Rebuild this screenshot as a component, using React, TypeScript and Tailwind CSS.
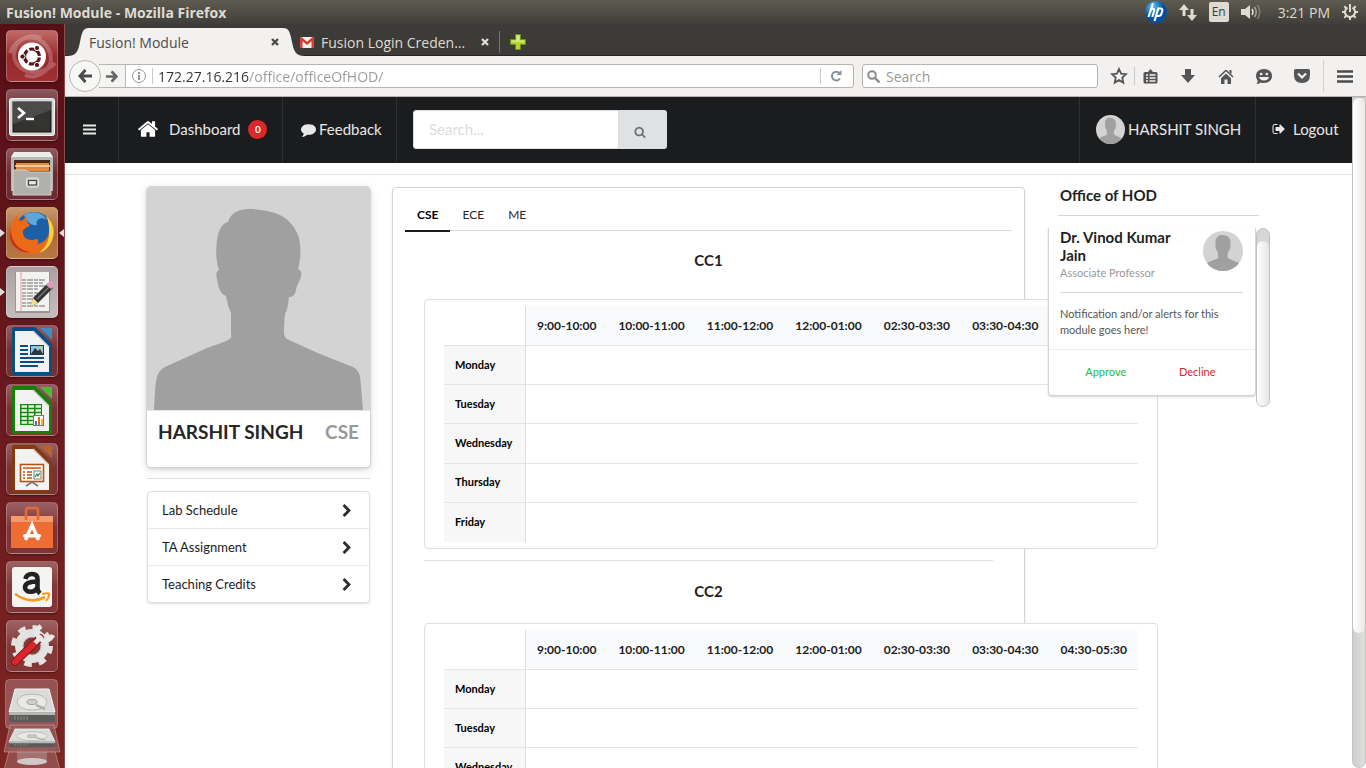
import React, { useState } from "react";
import type { ReactNode } from "react";

const SLOTS = ["9:00-10:00", "10:00-11:00", "11:00-12:00", "12:00-01:00", "02:30-03:30", "03:30-04:30", "04:30-05:30"];
const DAYS = ["Monday", "Tuesday", "Wednesday", "Thursday", "Friday"];
const BRANCHES = ["CSE", "ECE", "ME"];
const LINKS = ["Lab Schedule", "TA Assignment", "Teaching Credits"];

const PATHS = {
  home: "M1472 992v480q0 26-19 45t-45 19h-384v-384h-256v384h-384q-26 0-45-19t-19-45v-480q0-1 .5-3t.5-3l575-474 575 474q1 2 1 6zm223-69l-62 74q-8 9-21 11h-3q-13 0-21-7l-692-577-692 577q-12 8-24 7-13-2-21-11l-62-74q-8-10-7-23.5t11-21.5l719-599q32-26 76-26t76 26l244 204v-195q0-14 9-23t23-9h192q14 0 23 9t9 23v408l219 182q10 8 11 21.5t-7 23.5z",
  comment:
    "M1792 896q0 174-120 321.5t-326 233-450 85.5q-70 0-145-8-198 175-460 242-49 14-114 22-17 2-30.5-9t-17.5-29v-1q-3-4-.5-12t2-10 4.5-9.5l6-9 7-8.5 8-9q7-8 31-34.5t34.5-38 31-39.5 32.5-51 27-59 26-76q-157-89-247.5-220t-90.5-281q0-130 71-248.5t191-204.5 286-136.5 348-50.5q244 0 450 85.5t326 233 120 321.5z",
  search:
    "M1216 832q0-185-131.5-316.5t-316.5-131.5-316.5 131.5-131.5 316.5 131.5 316.5 316.5 131.5 316.5-131.5 131.5-316.5zm512 832q0 52-38 90t-90 38q-54 0-90-38l-343-342q-179 124-399 124-143 0-273.5-55.5t-225-150-150-225-55.5-273.5 55.5-273.5 150-225 225-150 273.5-55.5 273.5 55.5 225 150 150 225 55.5 273.5q0 220-124 399l343 343q37 37 37 90z",
  signOut:
    "M704 1440q0 4 1 20t.5 26.5-3 23.5-10 19.5-20.5 6.5h-320q-119 0-203.5-84.5t-84.5-203.5v-704q0-119 84.5-203.5t203.5-84.5h320q13 0 22.5 9.5t9.5 22.5q0 4 1 20t.5 26.5-3 23.5-10 19.5-20.5 6.5h-320q-66 0-113 47t-47 113v704q0 66 47 113t113 47h312l11.5 1 11.5 3 8 5.5 7 9 2 13.5zm928-544q0 26-19 45l-544 544q-19 19-45 19t-45-19-19-45v-288h-448q-26 0-45-19t-19-45v-384q0-26 19-45t45-19h448v-288q0-26 19-45t45-19 45 19l544 544q19 19 19 45z",
  chevron:
    "M1363 877l-742 742q-19 19-45 19t-45-19l-166-166q-19-19-19-45t19-45l531-531-531-531q-19-19-19-45t19-45l166-166q19-19 45-19t45 19l742 742q19 19 19 45t-19 45z",
};

function Glyph({ name, className }: { name: keyof typeof PATHS; className: string }) {
  return (
    <svg viewBox="0 0 1792 1792" fill="currentColor" className={className} aria-hidden="true">
      <path d={PATHS[name]} />
    </svg>
  );
}

function Avatar({ className }: { className: string }) {
  return (
    <svg viewBox="0 0 223 223" className={className} role="img" aria-label="Profile photo">
      <rect width="223" height="223" fill="#d3d3d3" />
      <path
        fill="#a0a0a0"
        d="M7 223C8 206 8 198 10 190C12 184 14 182 20 179L60 161C68 158 78 155 81 153C84 151 85 150 84 147V126C81 120 80 114 79 109C72 106 71 98 70 92C69 88 69 84 72 83C69 74 69 66 69.500 60C70 50 72 37 81 35C84 25 93 22 102 22C113 22 124 24 133 28C144 33 150 44 152 51C154 61 154 72 151 82C156 84 154 90 153 93C151 97 150 98 149 103C148 109 145 110 142 110C141 116 141 122 138 127C137 135 137 141 137 147C138 151 140 152 142 153L173 167L206 180C211 183 212 186 213 189C214 199 215 211 216 223Z"
      />
    </svg>
  );
}

/* ---------- desktop panel ---------- */

function TopPanel() {
  return (
    <header className="flex h-6 shrink-0 items-center justify-between bg-linear-to-b from-[#5e5b50] to-[#3f3e3a] pr-2 pl-[6px] font-['Open_Sans','Noto_Sans',sans-serif] text-[#dfdbd2]">
      <h1 className="text-[14px] font-bold">Fusion! Module - Mozilla Firefox</h1>
      <div className="flex items-center">
        <svg width="22" height="22" viewBox="0 0 22 22" className="mr-3">
          <defs>
            <radialGradient id="hpg" cx="35%" cy="25%">
              <stop offset="0" stopColor="#5cc0ee" />
              <stop offset="1" stopColor="#064f9e" />
            </radialGradient>
          </defs>
          <circle cx="11" cy="11" r="11" fill="url(#hpg)" />
          <path d="M8 2L3.500 16M5.500 9.500C7 7 9.800 7 9.200 10L7.300 16M13.600 6.500L9.500 20M12.800 7.500H15.500C18 7.500 17.500 9.500 17 11L16.500 12.500C16 14.500 15 15 13.500 15H11" fill="none" stroke="#fff" strokeWidth="2.100" />
        </svg>
        <svg width="18" height="17" viewBox="0 0 18 17" fill="currentColor" className="mr-3">
          <path d="M5 0L10 6H6.500V12H3.500V6H0ZM13 17L8 11H11.500V5H14.500V11H18Z" />
        </svg>
        <span className="mr-3 flex h-5 w-5 items-center justify-center rounded-xs bg-[#dfdbd2] text-[12px] text-[#3c3b37]">En</span>
        <svg width="21" height="18" viewBox="0 0 21 18" className="mr-4">
          <path d="M0 6H4L9 2V16L4 12H0Z" fill="currentColor" />
          <g fill="none" stroke="currentColor" strokeWidth="1.600">
            <path d="M11 6Q13 9 11 12" />
            <path d="M13.500 4Q17 9 13.500 14" opacity=".6" />
            <path d="M16.500 2Q21 9 16.500 16" opacity=".35" />
          </g>
        </svg>
        <time className="mr-3 text-[14px]">3:21 PM</time>
        <svg width="16" height="16" viewBox="0 0 16 16" fill="none" stroke="currentColor" strokeWidth="2">
          <path d="M5.500 3.700A5 5 0 1 0 10.500 3.700" />
          <path d="M8 0V8" />
          <path d="M0 8H3M13 8H16M8 13V16M2.300 2.300L4.300 4.300M13.700 2.300L11.700 4.300M2.300 13.700L4.400 11.600M13.700 13.700L11.600 11.600" />
        </svg>
      </div>
    </header>
  );
}

/* ---------- launcher ---------- */

function Tile({ label, tint, open, focused, children }: { label: string; tint?: string; open?: boolean; focused?: boolean; children: ReactNode }) {
  return (
    <div className="flex w-full shrink-0 items-center">
      <svg width="6" height="10" viewBox="0 0 6 10">{open && <path d="M0 1L5 5L0 9Z" fill="#e0dcd8" />}</svg>
      <button
        aria-label={label}
        className={`h-[52px] w-[52px] rounded-[5px] border border-white/25 shadow-[0_1px_2px_rgba(0,0,0,0.4)] ${tint ?? "bg-linear-to-b from-white/30 via-white/10 to-white/10"}`}
      >
        <svg width="50" height="50" viewBox="0 0 50 50">
          {children}
        </svg>
      </button>
      <svg width="6" height="10" viewBox="0 0 6 10">{focused && <path d="M6 1L1 5L6 9Z" fill="#e0dcd8" />}</svg>
    </div>
  );
}

function OfficeDoc({ color, light, children }: { color: string; light: string; children: ReactNode }) {
  return (
    <g>
      <path d="M7 1H28L45 18V46Q45 49 42 49H8Q5 49 5 46V4Q5 1 7 1Z" fill={color} />
      <path d="M8 5H26L42 21V46H8Z" fill="#f2f2f2" />
      <path d="M33 2H45V14Z" fill={light} />
      <path d="M26 5L42 21" stroke="#cfcfcf" strokeWidth="1.500" />
      {children}
    </g>
  );
}

function Drive({ y, flatten }: { y: number; flatten: number }) {
  return (
    <g transform={`translate(9 ${y}) scale(1 ${flatten})`}>
      <path d="M6 0H40L46 23H0Z" fill="#dadad8" stroke="#f2f2f2" strokeWidth="1" />
      <path d="M0 23H46V31Q46 33 44 33H2Q0 33 0 31Z" fill="#5a5a58" />
      <path d="M0 23H46V26H0Z" fill="#b5b5b2" />
      <ellipse cx="23" cy="13" rx="15" ry="8" fill="#e8e8e6" stroke="#b8b8b6" />
      <ellipse cx="23" cy="13" rx="5" ry="2.500" fill="#d0d0ce" stroke="#a0a09e" />
      <path d="M36 20L27 16" stroke="#aaa" strokeWidth="2" />
      <path d="M6 27V31M9 27V31M12 27V31M15 27V31M18 27V31" stroke="#8a8a88" />
    </g>
  );
}

function Launcher() {
  return (
    <nav aria-label="Launcher" className="flex w-[65px] shrink-0 flex-col gap-[7px] overflow-hidden border-r border-[#8f4a4c] bg-linear-to-b from-[#560f15] via-[#6a191e] to-[#7c2522] pt-[6px]">
      <Tile label="Search your computer" tint="bg-linear-to-b from-[#c06a6a] via-[#97282b] to-[#a03033]">
        <path d="M3 22C10 2 36 1 43 22C48 36 32 50 18 44M48 32C36 46 8 44 7 24C7 8 22 2 34 7" fill="none" stroke="#fff" strokeOpacity=".22" strokeWidth="4" />
        <circle cx="25" cy="25.500" r="14" fill="#fff" />
        <circle cx="25" cy="25.500" r="7.500" fill="none" stroke="#5e1216" strokeWidth="3.200" strokeDasharray="13.700 2" strokeDashoffset="-1" />
        <circle cx="15.500" cy="25.500" r="2.600" fill="#5e1216" stroke="#fff" />
        <circle cx="30" cy="17" r="2.600" fill="#5e1216" stroke="#fff" />
        <circle cx="30" cy="34" r="2.600" fill="#5e1216" stroke="#fff" />
      </Tile>
      <Tile label="Terminal">
        <rect x="2.500" y="8.500" width="45" height="37" rx="2" fill="#d8d8d6" stroke="#f4f4f4" />
        <rect x="6" y="12" width="38" height="30" fill="#333431" stroke="#111" />
        <path d="M6 12H44V20L6 34Z" fill="#4b4c49" />
        <path d="M11 18L17 23L11 28" fill="none" stroke="#fff" strokeWidth="2.600" />
        <path d="M19 29H27" stroke="#fff" strokeWidth="2.400" />
      </Tile>
      <Tile label="Files">
        <path d="M7 4H43L46 8V42H4V8Z" fill="#b9b9b6" />
        <path d="M7 3H43L46 8H4Z" fill="#ececea" />
        <rect x="7" y="11" width="36" height="12" fill="#4a2a1c" />
        <path d="M9 14H42V22H9Z" fill="#e58a3c" />
        <path d="M8 17H43" stroke="#f7e2c0" strokeWidth="1.500" />
        <path d="M6 21H19L22 23H44V46H6Z" fill="#b0b0ad" stroke="#cfcfcc" />
        <rect x="19.500" y="29" width="12" height="9" rx="2" fill="#c9c9c6" stroke="#e8e8e6" />
        <rect x="21.500" y="31.500" width="8" height="4.500" fill="#e9e9e7" stroke="#444" strokeWidth="1.200" />
      </Tile>
      <Tile label="Firefox" open focused tint="bg-linear-to-b from-[#c79a6c] via-[#a9683a] to-[#b97842]">
        <circle cx="27" cy="23" r="19" fill="#1c5fa5" />
        <path d="M17 7C24 2 36 4 40 12C34 8 28 12 30 17C24 18 20 14 17 7Z" fill="#5aa7dc" />
        <path d="M39 8C46 14 48 22 46 29C44 40 34 46 25 46C12 46 3 37 3 26C3 17 7 10 10 7C10 10 12 12 14 13C17 11 18 10 20 8C19 13 20 15 23 17C20 21 15 19 16 26C18 32 24 33 29 31C32 31 32 34 30 36C39 35 43 27 42 20C42 15 41 11 39 8Z" fill="#ea6a17" />
        <path d="M39 8C46 14 48 22 46 29C44 38 38 43 32 45C40 38 43 31 42 20C42 15 41 11 39 8Z" fill="#fbd23c" />
        <path d="M4 20C3 33 12 43 24 44C14 46 2 38 3 26Z" fill="#c3321c" />
      </Tile>
      <Tile label="Text Editor" open tint="bg-linear-to-b from-[#a9a09f] via-[#b8b0b0] to-[#c5bdbd]">
        <rect x="8" y="5" width="35" height="41" fill="#9b9695" />
        <path d="M9 5H42V44H9Z" fill="#f2f2f0" />
        <path d="M14 5V44" stroke="#e88" strokeWidth=".8" />
        <path d="M15 13H38M15 16H36M15 19H38M15 22H32M15 26H36M15 29H30M15 32H28M15 36H26M15 39H38" stroke="#9a9a9a" strokeWidth="1.300" strokeDasharray="4 1 6 1" />
        <path d="M23 40L26 31L41 16L46 21L31 36Z" fill="#333" />
        <path d="M39 18L43 14Q47 14 47 19L44 22Z" fill="#e79ab8" />
        <path d="M23 40L26 31L31 36Z" fill="#efe08c" />
        <path d="M30 32L42 20" stroke="#777" strokeWidth="1.500" />
      </Tile>
      <Tile label="Writer">
        <OfficeDoc color="#0a4f83" light="#3d8cc2">
          <path d="M13 20H21M13 24H21M13 28H21M13 32H37M13 36H37M13 40H31" stroke="#0b4d80" strokeWidth="2" />
          <rect x="23.500" y="19.500" width="13" height="9" fill="#8fc6ea" stroke="#0b3d60" />
          <path d="M24 28L28 22L31 25L33 23L36 28Z" fill="#333" />
          <circle cx="34" cy="21.500" r="1.200" fill="#f5c518" />
        </OfficeDoc>
      </Tile>
      <Tile label="Calc">
        <OfficeDoc color="#148008" light="#4fb83a">
          <rect x="13" y="19" width="22" height="21" fill="#148a12" />
          <path d="M14.500 21.500H20M21.500 21.500H27M28.500 21.500H34M14.500 25.500H20M21.500 25.500H27M28.500 25.500H34M14.500 29.500H20M21.500 29.500H27M28.500 29.500H34M14.500 33.500H20M21.500 33.500H27M14.500 37.500H20M21.500 37.500H27" stroke="#e6f8de" strokeWidth="2.600" />
          <rect x="26.500" y="30.500" width="10" height="10" fill="#fff" stroke="#777" />
          <path d="M29 40V36" stroke="#2a7fc0" strokeWidth="2" />
          <path d="M32 40V32" stroke="#e8641b" strokeWidth="2" />
          <path d="M35 40V34" stroke="#f2b632" strokeWidth="2" />
        </OfficeDoc>
      </Tile>
      <Tile label="Impress">
        <OfficeDoc color="#833a10" light="#b5652c">
          <rect x="13.500" y="20.500" width="23" height="17" fill="#fff" stroke="#b4501a" strokeWidth="1.600" />
          <path d="M16 24H34" stroke="#e07a3a" strokeWidth="2" />
          <path d="M16 28H18M20 28H25M16 31H18M20 31H25M16 34H18M20 34H25" stroke="#b4501a" strokeWidth="1.700" />
          <rect x="27" y="27" width="7" height="8" fill="#fff" stroke="#777" />
          <path d="M28 33L30 30L31 32L33 29" stroke="#1a9a2a" fill="none" strokeWidth="1.200" />
          <path d="M19 42L25 38L31 42" stroke="#777" fill="none" strokeWidth="1.600" />
        </OfficeDoc>
      </Tile>
      <Tile label="Ubuntu Software">
        <path d="M4 13H46V45H4Z" fill="#ee6d35" />
        <path d="M4 13H46V19H4Z" fill="#f59a6c" />
        <path d="M19 17V8Q19 5 21 5H29Q31 5 31 8V17" fill="none" stroke="#e56a3a" strokeWidth="2.600" />
        <path d="M18.500 37L25 22L31.500 37" fill="none" stroke="#fff" strokeWidth="3.400" />
        <rect x="16" y="31" width="18" height="3.600" rx="1.800" fill="#fff" />
      </Tile>
      <Tile label="Amazon">
        <rect x="5" y="5" width="40" height="40" rx="3" fill="#f4f4f3" />
        <path d="M18.500 17Q19.500 12 25 12Q30.500 12 30.500 17V26Q30.500 29 33 31.500M30.500 19.500C22 19.500 18 21.500 18 25.500C18 31 28.500 31.500 30.500 25" fill="none" stroke="#222" strokeWidth="4.600" />
        <path d="M8 32Q24 43 38 35" fill="none" stroke="#f79b1e" strokeWidth="2.600" />
        <path d="M35 32Q44 30 42 33Q42 36 39 39" fill="none" stroke="#f79b1e" strokeWidth="2" />
      </Tile>
      <Tile label="System Settings">
        <circle cx="25" cy="25" r="18.500" fill="none" stroke="#e2e2e0" strokeWidth="5" strokeDasharray="7.500 7.030" />
        <circle cx="25" cy="25" r="17" fill="#e2e2e0" />
        <circle cx="25" cy="25" r="9" fill="#8b3538" stroke="#bdbdbb" />
        <path d="M8 41L33 17" stroke="#8e1616" strokeWidth="8" strokeLinecap="round" />
        <path d="M8 41L30 20" stroke="#d8262a" strokeWidth="6" strokeLinecap="round" />
        <path d="M28 22L35 15M34 5C29 9 29 14 33 18C37 21 43 20 46 14" fill="none" stroke="#e8e8e6" strokeWidth="4.500" />
      </Tile>
      <button aria-label="Mounted drives" className="w-16 shrink-0">
        <svg width="64" height="92" viewBox="0 0 64 92">
          <rect x="5.500" y=".5" width="52" height="49" rx="4" fill="#fff" fillOpacity=".22" stroke="#fff" strokeOpacity=".25" />
          <path d="M10 68H54L60 91H4Z" fill="#fff" fillOpacity=".18" stroke="#fff" strokeOpacity=".3" />
          <path d="M17 70H47V83Q32 89 17 83Z" fill="#a47070" />
          <ellipse cx="32" cy="82.500" rx="15" ry="3.500" fill="#cfcac9" />
          <path d="M10 46H54L60 73H4Z" fill="#9a5c5c" fillOpacity=".8" stroke="#fff" strokeOpacity=".3" />
          <Drive y={10} flatten={1} />
          <Drive y={50} flatten={0.55} />
        </svg>
      </button>
    </nav>
  );
}

/* ---------- browser chrome ---------- */

function CloseMark() {
  return (
    <svg width="8" height="8" viewBox="0 0 8 8" stroke="currentColor" strokeWidth="2.400" aria-hidden="true">
      <path d="M1 1L7 7M7 1L1 7" />
    </svg>
  );
}

function TabStrip() {
  return (
    <div className="flex h-8 items-end bg-[#3c3b37] font-['Open_Sans','Noto_Sans',sans-serif] text-[14px] shadow-[inset_0_-1px_0_#262522]">
      <svg width="22" height="28" viewBox="0 0 22 28" className="ml-[2px]">
        <path d="M0 28C9 28 11 24 13 14S16 0 22 0V28Z" fill="#f2f1f0" />
      </svg>
      <div className="flex h-7 w-[194px] items-center justify-between bg-[#f2f1f0] pr-1 text-[#4c4c4c]">
        <span>Fusion! Module</span>
        <button aria-label="Close tab"><CloseMark /></button>
      </div>
      <svg width="22" height="28" viewBox="0 0 22 28">
        <path d="M22 28C13 28 11 24 9 14S6 0 0 0V28Z" fill="#f2f1f0" />
      </svg>
      <div className="-ml-[5px] flex h-7 items-center text-[#dfdbd2]">
        <svg width="14" height="11" viewBox="0 0 14 11">
          <rect width="14" height="11" fill="#f4f4f4" />
          <path d="M1.300 11V1.500L7 6.500L12.700 1.500V11" fill="none" stroke="#d8372c" strokeWidth="2.400" />
        </svg>
        <span className="ml-[7px] w-[160px] whitespace-nowrap">Fusion Login Creden…</span>
        <button aria-label="Close tab"><CloseMark /></button>
        <span className="ml-[10px] h-[22px] w-px bg-[#77756e]" />
        <button aria-label="New tab" className="ml-[10px]">
          <svg width="16" height="16" viewBox="0 0 16 16">
            <path d="M5.500 .5H10.500V5.500H15.500V10.500H10.500V15.500H5.500V10.500H.5V5.500H5.500Z" fill="#b4d334" stroke="#6b8f1a" />
            <path d="M6.500 1.500H9.500V6.500H14.500V8H1.500V6.500H6.500Z" fill="#d8ea7c" />
          </svg>
        </button>
      </div>
    </div>
  );
}

function Toolbar() {
  return (
    <div className="flex h-[41px] items-center border-b border-[#b8b5b0] bg-[#f2f1f0] pl-1 font-['Open_Sans','Noto_Sans',sans-serif] text-[14px] text-[#555]">
      <button aria-label="Back" className="z-10 flex h-8 w-8 shrink-0 items-center justify-center rounded-full border border-[#b8b5b0] bg-[#f7f7f6]">
        <svg width="14" height="14" viewBox="0 0 14 14" fill="none" stroke="#4c4c4c" strokeWidth="3">
          <path d="M7.500 1L2 7L7.500 13M2 7H14" />
        </svg>
      </button>
      <div className="-ml-[2px] flex h-6 min-w-0 flex-1 items-center rounded-r-[3px] border border-l-0 border-[#b8b5b0] bg-white">
        <button aria-label="Forward" className="flex h-full w-[27px] shrink-0 items-center justify-center border-r border-[#b8b5b0] bg-[#f4f4f3]">
          <svg width="12" height="13" viewBox="0 0 14 14" fill="none" stroke="#666" strokeWidth="3.200">
            <path d="M6.500 1L12 7L6.500 13M12 7H0" />
          </svg>
        </button>
        <svg width="14" height="14" viewBox="0 0 14 14" className="ml-[6px] shrink-0" fill="none" stroke="#909090">
          <circle cx="7" cy="7" r="6.500" />
          <path d="M7 3V5M7 6V11" strokeWidth="2" />
        </svg>
        <span className="ml-[6px] h-4 w-px shrink-0 bg-[#ccc]" />
        <input
          aria-label="Address"
          defaultValue="172.27.16.216/office/officeOfHOD/"
          className="ml-[5px] h-full min-w-0 flex-1 bg-linear-to-r from-[#333333] from-[91px] to-[#999999] to-[91px] bg-clip-text text-transparent outline-none"
        />
        <span className="h-4 w-px shrink-0 bg-[#ccc]" />
        <button aria-label="Reload" className="ml-[9px] mr-[10px]">
          <svg width="13" height="12" viewBox="0 0 13 12" fill="none" stroke="#8a929a" strokeWidth="2">
            <path d="M9.500 3A4.400 4.400 0 1 0 10 8.500" />
            <path d="M11.500 0V5H6.500Z" fill="#8a929a" stroke="none" />
          </svg>
        </button>
      </div>
      <label className="ml-2 flex h-6 w-[236px] shrink-0 items-center rounded-[3px] border border-[#b8b5b0] bg-white">
        <svg width="13" height="13" viewBox="0 0 13 13" className="ml-1" fill="none" stroke="#8c8c8c" strokeWidth="2">
          <circle cx="5" cy="5" r="3.800" />
          <path d="M8 8L12.500 12.500" strokeWidth="2.400" />
        </svg>
        <input aria-label="Search the web" placeholder="Search" className="ml-[6px] min-w-0 flex-1 outline-none placeholder:text-[#999]" />
      </label>
      <div className="ml-3 flex shrink-0 items-center">
        <button aria-label="Bookmark">
          <svg width="18" height="18" viewBox="0 0 18 18" fill="none" stroke="#555" strokeWidth="1.800">
            <path d="M9 2L11.100 6.600L16 7.200L12.300 10.600L13.300 15.600L9 13.100L4.700 15.600L5.700 10.600L2 7.200L6.900 6.600Z" />
          </svg>
        </button>
        <span className="ml-[6px] h-[18px] w-px bg-[#ccc]" />
        <button aria-label="Library" className="ml-[8px]">
          <svg width="15" height="15" viewBox="0 0 15 15">
            <path d="M2 3H5L7.500 0L10 3H13Q14.500 3 14.500 4.500V13Q14.500 14.500 13 14.500H2Q.5 14.500 .5 13V4.500Q.5 3 2 3Z" fill="#555" />
            <path d="M3 6H5M6.500 6H12.500M3 9H5M6.500 9H12.500M3 12H5M6.500 12H12.500" stroke="#f2f1f0" strokeWidth="1.500" />
          </svg>
        </button>
        <button aria-label="Downloads" className="ml-[23px]">
          <svg width="14" height="14" viewBox="0 0 14 14" fill="#555"><path d="M4 0H10V6H14L7 14L0 6H4Z" /></svg>
        </button>
        <button aria-label="Home" className="ml-[23px]">
          <svg width="16" height="15" viewBox="0 0 16 15">
            <path d="M8 1.200L1 8M8 1.200L15 8" stroke="#555" strokeWidth="1.600" fill="none" />
            <path d="M11.500 1H13.500V5L11.500 3.500Z" fill="#555" />
            <path d="M8 4.500L13 9.300V15H9.500V10.500H6.500V15H3V9.300Z" fill="#555" />
          </svg>
        </button>
        <button aria-label="Chat" className="ml-[22px]">
          <svg width="16" height="15" viewBox="0 0 16 15">
            <path d="M8 0C13 0 16 3 16 7S13 14 8 14Q6 14 4.500 13.500Q3 15 .5 15Q2 13.500 1.500 11.500Q0 9.500 0 7C0 3 3 0 8 0Z" fill="#555" />
            <circle cx="5.200" cy="5" r="1.300" fill="#f2f1f0" />
            <circle cx="10.800" cy="5" r="1.300" fill="#f2f1f0" />
            <path d="M3 8H13Q12 11.500 8 11.500T3 8Z" fill="#f2f1f0" />
          </svg>
        </button>
        <button aria-label="Pocket" className="ml-[22px]">
          <svg width="16" height="14" viewBox="0 0 16 14">
            <path d="M1.500 0H14.500Q16 0 16 1.500V6Q16 14 8 14T0 6V1.500Q0 0 1.500 0Z" fill="#555" />
            <path d="M4 4.500L8 8.500L12 4.500" fill="none" stroke="#f2f1f0" strokeWidth="2.200" />
          </svg>
        </button>
        <span className="ml-[13px] h-8 w-px bg-[#d4d2cf]" />
        <button aria-label="Menu" className="mr-[13px] ml-[13px]">
          <svg width="16" height="13" viewBox="0 0 16 13" stroke="#4c4c4c" strokeWidth="2.400">
            <path d="M0 1.500H16M0 6.500H16M0 11.500H16" />
          </svg>
        </button>
      </div>
    </div>
  );
}

/* ---------- site ---------- */

function NavBar() {
  return (
    <nav className="flex h-[66px] bg-[#1b1c1d] text-[15px] text-white/90">
      <button aria-label="Toggle sidebar" className="flex w-[54px] items-center justify-center border-r border-[#2e2f30] pr-[5px] pb-[2px]">
        <svg width="13" height="11" viewBox="0 0 13 11" stroke="currentColor" strokeWidth="2">
          <path d="M0 1.500H13M0 5.500H13M0 9.500H13" />
        </svg>
      </button>
      <a href="#dashboard" className="flex w-[164px] items-center border-r border-[#2e2f30] pb-[2px] pl-[18px]">
        <Glyph name="home" className="h-[22px] w-[22px] text-white" />
        <span className="ml-[10px]">Dashboard</span>
        <span className="ml-2 flex h-[19px] w-[19px] items-center justify-center rounded-full bg-[#db2828] text-[10px] font-bold text-white">0</span>
      </a>
      <a href="#feedback" className="flex w-[114px] items-center border-r border-[#2e2f30] pb-[2px] pl-[18px]">
        <Glyph name="comment" className="mr-[3px] h-[15px] w-[15px]" />
        Feedback
      </a>
      <form className="mt-[13px] ml-4 flex h-[39px] w-[254px]" onSubmit={(e) => e.preventDefault()}>
        <input
          aria-label="Search"
          placeholder="Search..."
          className="min-w-0 flex-1 rounded-l-[3px] border border-[#dededf] bg-white px-[15px] text-black outline-none placeholder:text-[#dcdcdc]"
        />
        <button aria-label="Submit search" className="flex w-12 items-center justify-center rounded-r-[3px] bg-[#e0e1e2] pr-[7px] text-[#6e6f70]">
          <Glyph name="search" className="mt-1 h-3 w-3" />
        </button>
      </form>
      <a href="#profile" className="ml-auto flex w-[176px] items-center border-l border-[#2e2f30] pb-[2px] pl-4 whitespace-nowrap">
        <Avatar className="mr-[3px] h-[29px] w-[29px] rounded-full" />
        HARSHIT SINGH
      </a>
      <a href="#logout" className="flex w-[97px] items-center border-l border-[#2e2f30] pb-[2px] pl-4">
        <Glyph name="signOut" className="mr-[7px] h-[14px] w-[14px]" />
        Logout
      </a>
    </nav>
  );
}

function ProfileColumn() {
  return (
    <aside>
      <section className="overflow-hidden rounded-[4px] bg-white shadow-[0_0_0_1px_#d4d4d5,0_2px_4px_rgba(34,36,38,0.12),0_2px_10px_rgba(34,36,38,0.15)]">
        <Avatar className="block w-full" />
        <div className="flex h-[57px] justify-between border-t border-[#e8e8e8] px-[11px] pt-[6px] text-[19px] leading-[30px]">
          <h2 className="font-bold text-[#262626]">HARSHIT SINGH</h2>
          <span className="font-bold text-[#999]">CSE</span>
        </div>
      </section>
      <hr className="mt-[11px] mb-3 border-[#dedede]" />
      <ul className="rounded-[4px] border border-[#dededf] shadow-[0_1px_2px_rgba(34,36,38,0.15)]">
        {LINKS.map((link) => (
          <li key={link} className="border-b border-[#e8e8e9] last:border-b-0">
            <a href="#module" className="flex h-9 items-center justify-between pt-[2px] pr-[15px] pl-[14px] text-[13px] text-[#1c1c1c]">
              {link}
              <Glyph name="chevron" className="h-[14px] w-[14px] text-[#2c2c2e]" />
            </a>
          </li>
        ))}
      </ul>
    </aside>
  );
}

function TimeTable() {
  return (
    <div className="w-max rounded-[4px] border border-[#dededf] bg-white px-[19px] py-[6px]">
      <table className="h-[236px] w-[694px] border-separate border-spacing-0 text-[#1c1c1c]">
        <thead>
          <tr className="h-10 text-[12px]">
            <td className="w-[81px] border-b border-[#e4e4e5]" />
            {SLOTS.map((slot) => (
              <th key={slot} scope="col" className="border-b border-[#e4e4e5] bg-[#f9fafb] px-[10px] font-bold whitespace-nowrap first-of-type:border-l first-of-type:border-l-[#dededf]">
                {slot}
              </th>
            ))}
          </tr>
        </thead>
        <tbody>
          {DAYS.map((day) => (
            <tr key={day} className="group h-[39px] text-[11px]">
              <th scope="row" className="border-b border-[#e4e4e5] bg-[#f7f7f7] px-[11px] text-left font-bold text-black group-last:border-b-0">
                {day}
              </th>
              {SLOTS.map((slot) => (
                <td key={slot} className="border-b border-[#e4e4e5] first-of-type:border-l first-of-type:border-l-[#dededf] group-last:border-b-0" />
              ))}
            </tr>
          ))}
        </tbody>
      </table>
    </div>
  );
}

function SchedulePanel() {
  const [active, setActive] = useState("CSE");
  return (
    <section className="rounded-[4px] border border-[#d4d4d5] px-3 shadow-[0_1px_2px_rgba(34,36,38,0.15)]">
      <div role="tablist" className="flex h-[43px] items-end border-b border-[#d8d8d9] text-[12px]">
        {BRANCHES.map((branch) => (
          <button
            key={branch}
            role="tab"
            aria-selected={active === branch}
            onClick={() => setActive(branch)}
            className={`-mb-[2px] border-b-2 px-3 pb-[7px] leading-4 ${active === branch ? "border-[#1b1c1d] font-bold text-black" : "border-transparent text-[#262626]"}`}
          >
            {branch}
          </button>
        ))}
      </div>
      <div className="px-[19px] text-[#1f1f1f]">
        <h3 className="pt-[19px] pb-[29px] text-center text-[15px] leading-5 font-bold">CC1</h3>
        <TimeTable />
        <hr className="mt-[11px] border-[#dedede]" />
        <h3 className="pt-5 pb-[22px] text-center text-[15px] leading-5 font-bold">CC2</h3>
        <TimeTable />
      </div>
    </section>
  );
}

function OfficeColumn() {
  return (
    <aside className="relative z-10">
      <h2 className="mr-[11px] ml-[11px] border-b border-[#d8d8d9] pb-3 pl-[2px] text-[15px] leading-4 font-bold text-[#1f1f1f]">Office of HOD</h2>
      <div className="mt-3 flex h-[179px]">
        <article className="ml-px flex h-[168px] min-w-0 flex-1 flex-col rounded-b-[4px] border border-t-0 border-[#d4d4d5] bg-white shadow-[0_1px_2px_rgba(34,36,38,0.2)]">
          <div className="flex-1 pr-3 pl-[11px]">
            <div className="flex justify-between border-b border-[#d8d8d9] pb-[11px]">
              <div>
                <h3 className="text-[15px] leading-[18px] font-bold text-[#1f1f1f]">
                  Dr. Vinod Kumar
                  <br />
                  Jain
                </h3>
                <p className="text-[11px] leading-[17px] text-[#999]">Associate Professor</p>
              </div>
              <Avatar className="mt-[3px] h-10 w-10 rounded-full" />
            </div>
            <p className="mt-[13px] text-[11px] leading-4 text-[#555]">Notification and/or alerts for this module goes here!</p>
          </div>
          <div className="flex h-[46px] items-center border-t border-[#ececec] pr-3 pl-[11px] text-[11px]">
            <button className="h-7 flex-1 text-[#21ba45]">Approve</button>
            <button className="h-7 flex-1 text-[#db2828]">Decline</button>
          </div>
        </article>
        <div className="w-[14px] rounded-full border border-[#c4c2bf] bg-[#d6d6d5] pt-3">
          <div className="h-full rounded-full bg-linear-to-r from-white to-[#e6e5e3]" />
        </div>
      </div>
    </aside>
  );
}

export default function App() {
  return (
    <div className="flex h-screen flex-col overflow-hidden bg-white">
      <TopPanel />
      <div className="flex min-h-0 flex-1">
        <Launcher />
        <div className="flex min-w-0 flex-1 flex-col">
          <TabStrip />
          <Toolbar />
          <div className="flex min-h-0 flex-1">
            <main className="min-w-0 flex-1 overflow-hidden font-[Lato,sans-serif]">
              <NavBar />
              <hr className="mt-[11px] border-[#dedede]" />
              <div className="grid grid-cols-[minmax(0,223fr)_minmax(0,633fr)_minmax(0,223fr)] items-start gap-[22px] px-[82px] pt-3">
                <ProfileColumn />
                <SchedulePanel />
                <OfficeColumn />
              </div>
            </main>
            <div className="w-[14px] shrink-0 rounded-b-full border border-[#c4c2bf] bg-linear-to-r from-[#d0d0cf] to-[#dededd]">
              <div className="h-[80%] rounded-full bg-linear-to-r from-white to-[#e9e8e6]" />
            </div>
          </div>
        </div>
      </div>
    </div>
  );
}
